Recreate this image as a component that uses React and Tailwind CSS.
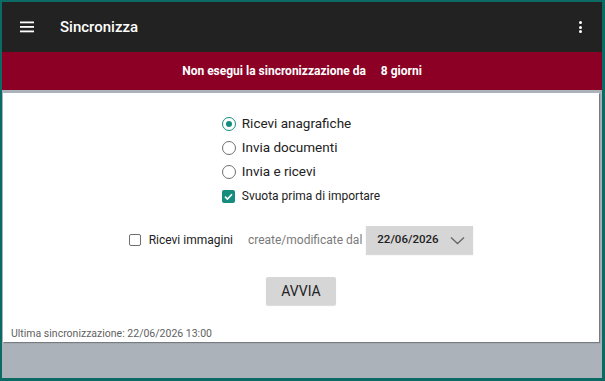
import React from "react";

function Radio({ checked, label }) {
  return (
    <div className="flex h-6 items-center">
      <div
        className={
          "flex h-[14px] w-[14px] items-center justify-center rounded-full border-[1.6px] " +
          (checked ? "border-[#168c7e]" : "border-[#6f6f6f]")
        }
      >
        {checked && <div className="h-[6px] w-[6px] rounded-full bg-[#168c7e]" />}
      </div>
      <span className="ml-[6px] text-[13.5px] leading-none text-[#222]">{label}</span>
    </div>
  );
}

export default function App() {
  return (
    <div
      className="flex h-[381px] w-[605px] flex-col border-b-[3px] border-l-2 border-r-[3px] border-t-2 border-[#0c6a65] bg-[#abb2b9]"
      style={{ fontFamily: "Roboto, 'Liberation Sans', sans-serif" }}
    >
      <div className="flex h-[50px] shrink-0 items-center bg-[#222222] pl-[17px] pr-[20px] text-white">
        <svg width="16" height="12" viewBox="0 0 16 12" className="mt-[-1px]">
          <rect x="1" y="0.5" width="14" height="1.8" fill="white" />
          <rect x="1" y="5" width="14" height="1.8" fill="white" />
          <rect x="1" y="9.5" width="14" height="1.8" fill="white" />
        </svg>
        <span className="ml-[25px] text-[15px] font-medium leading-none">Sincronizza</span>
        <div className="ml-auto flex flex-col gap-[1.5px]">
          <div className="h-[3px] w-[3px] rounded-full bg-white" />
          <div className="h-[3px] w-[3px] rounded-full bg-white" />
          <div className="h-[3px] w-[3px] rounded-full bg-white" />
        </div>
      </div>
      <div className="flex h-[38px] shrink-0 items-center justify-center bg-[#8b0024] text-[12px] font-bold text-white">
        <span>Non esegui la sincronizzazione da</span>
        <span className="ml-[15px]">8 giorni</span>
      </div>
      <div className="flex flex-1 flex-col pb-[36px] pl-px pr-[3px] pt-[3px]">
        <div className="flex flex-1 flex-col bg-white pt-[19px] shadow-[1px_1px_1px_rgba(0,0,0,0.3)]">
          <div className="mx-auto flex w-fit flex-col items-start">
            <Radio checked label="Ricevi anagrafiche" />
            <Radio label="Invia documenti" />
            <Radio label="Invia e ricevi" />
            <div className="flex h-6 items-center">
              <div className="flex h-[13px] w-[13px] items-center justify-center rounded-[2px] bg-[#168c7e]">
                <svg width="11" height="11" viewBox="0 0 11 11">
                  <path d="M2 5.6 L4.4 8 L9 3.2" stroke="white" strokeWidth="1.6" fill="none" />
                </svg>
              </div>
              <span className="ml-[7px] text-[12px] leading-none text-[#222]">Svuota prima di importare</span>
            </div>
          </div>
          <div className="mx-auto mt-[18px] flex items-center">
            <div className="h-[12px] w-[12px] rounded-[2px] border-[1.6px] border-[#6f6f6f]" />
            <span className="ml-[8px] text-[12px] text-[#222]">Ricevi immagini</span>
            <span className="ml-[15px] text-[12px] text-[#7a7a7a]">create/modificate dal</span>
            <div className="ml-[4px] flex h-[28px] w-[107px] items-center bg-[#d6d6d6] pl-[11px] shadow-[0_1px_1px_rgba(0,0,0,0.15)]">
              <span className="text-[11.5px] font-medium text-[#222]">22/06/2026</span>
              <svg width="15" height="9" viewBox="0 0 15 9" className="ml-[11px]">
                <path d="M1 1.5 L7.5 7.5 L14 1.5" stroke="#666" strokeWidth="1.3" fill="none" />
              </svg>
            </div>
          </div>
          <div className="mx-auto mt-[23px] flex h-[28px] w-[70px] items-center justify-center rounded-[2px] bg-[#d6d6d6] text-[14px] font-normal text-[#222] shadow-[0_1px_1px_rgba(0,0,0,0.15)]">
            AVVIA
          </div>
          <div className="mt-auto pl-[8px] text-[10.5px] leading-4 text-[#5f5f5f]">
            Ultima sincronizzazione: 22/06/2026 13:00
          </div>
        </div>
      </div>
    </div>
  );
}
